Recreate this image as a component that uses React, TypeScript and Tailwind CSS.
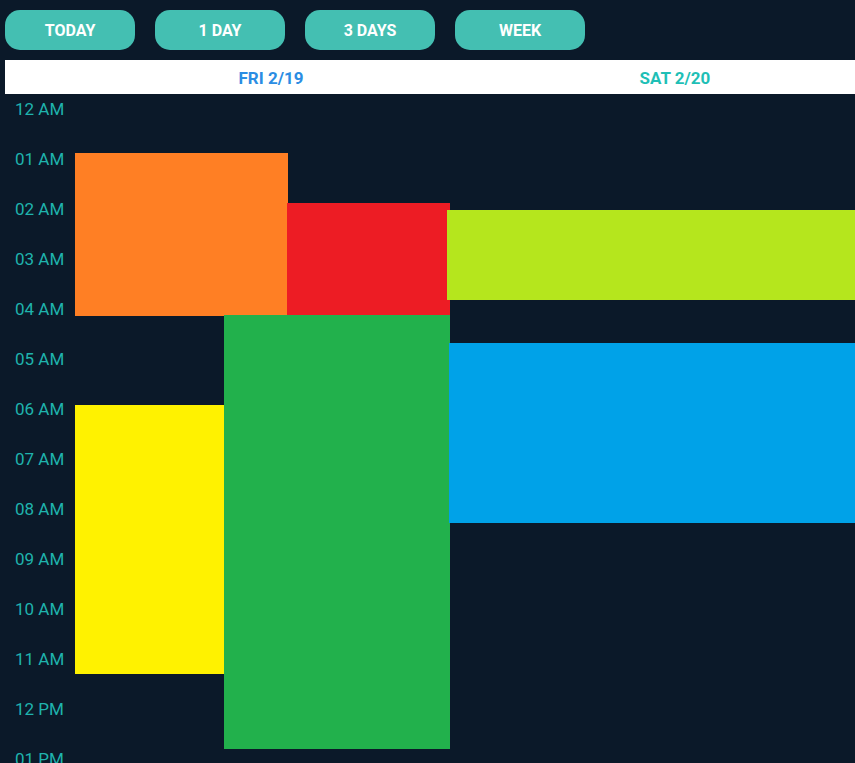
import React from "react";

type CalEvent = {
	id: string;
	color: string;
	left: number;
	width: number;
	top: number;
	height: number;
};

// pixel geometry inside the day canvas (one hour = 50px, 12 AM at top 9)
const EVENTS: CalEvent[] = [
	{ id: "a", color: "#ff7f24", left: 0, width: 213, top: 59, height: 163 },
	{ id: "b", color: "#ed1c24", left: 212, width: 163, top: 109, height: 112 },
	{ id: "c", color: "#b5e61d", left: 372, width: 410, top: 116, height: 90 },
	{ id: "d", color: "#22b14c", left: 149, width: 226, top: 221, height: 434 },
	{ id: "e", color: "#fff200", left: 0, width: 149, top: 311, height: 269 },
	{ id: "f", color: "#00a2e8", left: 374, width: 408, top: 249, height: 180 },
];

const HOURS = Array.from({ length: 24 }, (_, i) => {
	const h = i % 12 === 0 ? 12 : i % 12;
	return `${String(h).padStart(2, "0")} ${i < 12 ? "AM" : "PM"}`;
});

const TABS = ["TODAY", "1 DAY", "3 DAYS", "WEEK"];

export default function App() {
	return (
		<div
			className="w-[855px] h-[763px] overflow-hidden bg-[#0b1929]"
			style={{ fontFamily: "Roboto, 'Liberation Sans', sans-serif" }}
		>
			{/* View switcher */}
			<div className="flex gap-5 pl-[5px] pt-[10px]">
				{TABS.map((t) => (
					<button
						key={t}
						type="button"
						className="w-[130px] h-10 pt-px rounded-[15px] bg-[#44bfb2] text-white text-[16px] font-bold"
					>
						{t}
					</button>
				))}
			</div>

			{/* Day header */}
			<div className="mt-[10px] ml-[5px] h-[34px] pt-[3px] bg-white flex items-center overflow-hidden">
				<div className="w-[64px] shrink-0" />
				<div className="w-[404px] shrink-0 text-center text-[17px] font-bold text-[#2b8de3]">
					FRI 2/19
				</div>
				<div className="w-[404px] shrink-0 text-center text-[17px] font-bold text-[#1fbfb6]">
					SAT 2/20
				</div>
			</div>

			{/* Grid */}
			<div className="flex">
				<div className="w-[75px] shrink-0 pt-[5px]">
					{HOURS.map((h) => (
						<div
							key={h}
							className="h-[50px] pl-[15px] text-[17px] leading-[20px] text-[#1fb3ad] whitespace-nowrap"
						>
							{h}
						</div>
					))}
				</div>
				<div className="relative flex-1">
					{EVENTS.map((e) => (
						<div
							key={e.id}
							className="absolute"
							style={{
								left: e.left,
								width: e.width,
								top: e.top,
								height: e.height,
								backgroundColor: e.color,
							}}
						/>
					))}
				</div>
			</div>
		</div>
	);
}
